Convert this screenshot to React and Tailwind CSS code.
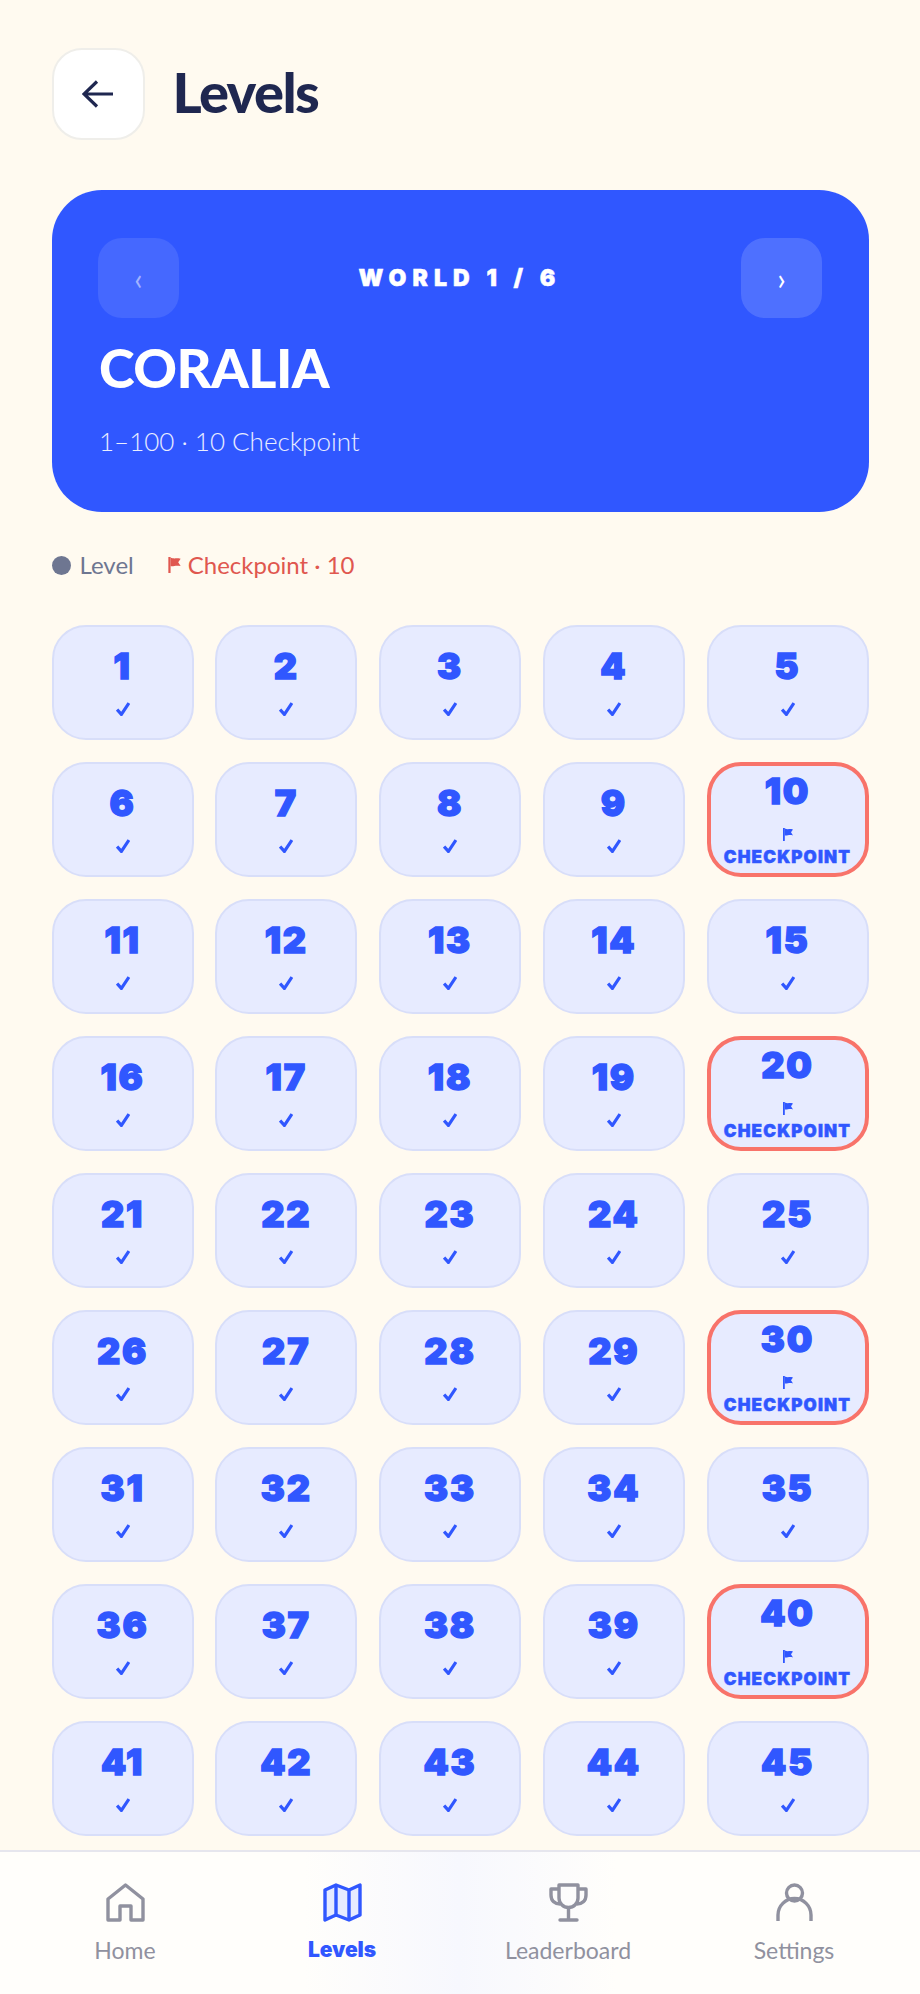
import React from "react";

const levels = Array.from({ length: 45 }, (_, i) => i + 1);

const FlagIcon = ({ className }) => (
  <svg viewBox="0 0 10 13" className={className} fill="currentColor">
    <path d="M0 0h1.8v13H0z" />
    <path d="M1.8 0.4c2.4 1.4 4.4 0.2 8.2 1L8 4.2l2 3.2C6 6.4 4 8 1.8 7.4z" />
  </svg>
);

const CheckIcon = () => (
  <svg viewBox="0 0 13 13" className="w-[14px] h-[14px] text-[#3057ff]" fill="none" stroke="currentColor" strokeWidth="3">
    <path d="M1 7l4 4.5L12 1" />
  </svg>
);

const LevelTile = ({ n }) => {
  const isCheckpoint = n % 10 === 0;

  if (isCheckpoint) {
    return (
      <div className="h-[115px] rounded-[34px] bg-[#e7ebff] border-[4.5px] border-[#f8736a] flex flex-col items-center [font-family:Inter,sans-serif]">
        <div className="mt-[6px] h-[38px] leading-[38px] text-[36px] font-black text-[#3057ff] tracking-[0.05em] [-webkit-text-stroke:1.4px_#3057ff]">
          {n}
        </div>
        <FlagIcon className="mt-[18px] w-[10px] h-[13px] text-[#3057ff]" />
        <div className="mt-[7px] leading-[18px] text-[17px] font-black text-[#3057ff] tracking-[0.07em] [-webkit-text-stroke:0.5px_#3057ff]">
          CHECKPOINT
        </div>
      </div>
    );
  }

  return (
    <div className="h-[115px] rounded-[34px] bg-[#e7ebff] border-2 border-[#d8def9] flex flex-col items-center [font-family:Inter,sans-serif]">
      <div className="mt-[20px] h-[38px] leading-[38px] text-[36px] font-black text-[#3057ff] tracking-[0.05em] [-webkit-text-stroke:1.4px_#3057ff]">
        {n}
      </div>
      <div className="mt-[17px] flex">
        <CheckIcon />
      </div>
    </div>
  );
};

const NavItem = ({ label, active, children }) => (
  <div className="flex flex-col items-center">
    <svg
      viewBox="0 0 39 39"
      className={`w-[39px] h-[39px] ${active ? "text-[#3057ff]" : "text-[#90919f]"}`}
      fill="none"
      stroke="currentColor"
      strokeWidth="3.4"
      strokeLinejoin="round"
    >
      {children}
    </svg>
    <div
      className={`mt-[6px] leading-[44px] ${
        active
          ? "font-black text-[#3057ff] [font-family:Inter,sans-serif] text-[21px] tracking-[-0.005em]"
          : "text-[23px] text-[#90919f]"
      }`}
    >
      {label}
    </div>
  </div>
);

export default function App() {
  return (
    <div className="w-[920px] h-[1994px] flex flex-col overflow-hidden bg-[#fffaf0] font-['Lato',sans-serif]">
      <div className="flex-1 min-h-0 overflow-hidden px-[51.5px] pt-[48px]">
        <div className="flex items-center gap-[28px]">
          <button className="w-[93px] h-[92px] rounded-[30px] bg-white border-2 border-[#efeeea] flex items-center justify-center">
            <svg viewBox="0 0 32 28" className="w-[32px] h-[28px] text-[#1f2750]" fill="none" stroke="currentColor" strokeWidth="3.2">
              <path d="M31 14H2M15 1.5L2 14l13 12.5" />
            </svg>
          </button>
          <h1 className="text-[56px] leading-[60px] mb-[4px] font-black text-[#1f2750] tracking-[-0.028em]">Levels</h1>
        </div>

        <div className="mt-[50px] h-[322px] rounded-[50px] bg-[#3057ff] px-[46.5px] pt-[48px] text-white">
          <div className="flex items-center justify-between">
            <div className="w-[81px] h-[80px] rounded-[24px] bg-white/10 flex items-center justify-center text-[30px] text-white/50">
              ‹
            </div>
            <div className="text-[23px] leading-[30px] font-black tracking-[0.265em] [-webkit-text-stroke:0.5px_#fff] [font-family:Inter,sans-serif]">
              WORLD 1 / 6
            </div>
            <div className="w-[81px] h-[80px] rounded-[24px] bg-white/15 flex items-center justify-center text-[30px]">
              ›
            </div>
          </div>
          <div className="mt-[19px] ml-[1px] text-[54px] leading-[62px] font-black tracking-[-0.01em]">CORALIA</div>
          <div className="mt-[26px] ml-[1px] text-[26px] leading-[32px] font-light text-white/90">1–100 · 10 Checkpoint</div>
        </div>

        <div className="mt-[38px] h-[30px] flex items-center text-[24px] leading-[30px]">
          <span className="w-[19px] h-[19px] rounded-full bg-[#6e7691]" />
          <span className="ml-[9px] text-[#6e7691]">Level</span>
          <FlagIcon className="ml-[34px] w-[13px] h-[16px] text-[#e0574f]" />
          <span className="ml-[7px] text-[#e0574f]">Checkpoint · 10</span>
        </div>

        <div className="mt-[45px] grid grid-cols-[repeat(4,142px)_162px] gap-x-[21.75px] gap-y-[22px]">
          {levels.map((n) => (
            <LevelTile key={n} n={n} />
          ))}
        </div>
      </div>

      <nav className="h-[144px] shrink-0 border-t-2 border-[#e6e6ee] bg-[linear-gradient(90deg,#fffefb_33%,#f7f8fe_50%,#fffefb_67%)] px-4 pt-[31px] grid grid-cols-[218px_216px_236px_216px]">
        <NavItem label="Home">
          <path d="M2 37V16L19.5 2 37 16v21H25V23H14v14z" />
        </NavItem>
        <NavItem label="Levels" active>
          <path d="M2 7L13 2l13 5 11-5v30l-11 5-13-5-11 5z" fill="#e6ebff" />
          <path d="M13 2v30M26 7v30" />
        </NavItem>
        <NavItem label="Leaderboard">
          <path d="M10 2h19v13a9.5 9.5 0 0 1-19 0z" />
          <path d="M10 6H2v6c0 6 4 9 9 9M29 6h8v6c0 6-4 9-9 9" />
          <path d="M19.5 25v12M11 37h17" strokeLinecap="round" />
        </NavItem>
        <NavItem label="Settings">
          <circle cx="19.5" cy="10" r="8" />
          <path d="M3 38v-6a16.5 16.5 0 0 1 33 0v6" />
        </NavItem>
      </nav>
    </div>
  );
}
